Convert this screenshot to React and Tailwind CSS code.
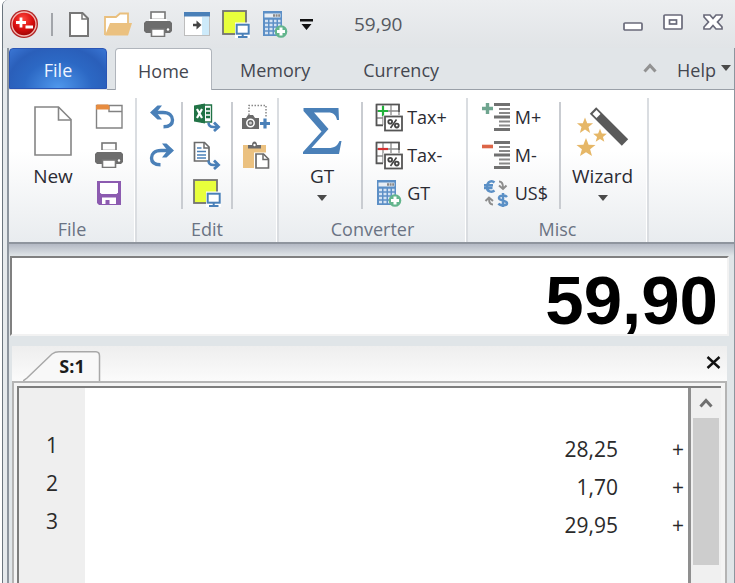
import React from "react";

const BLUE = "#4a80b8";
const GRAY = "#6a6a6a";

function Svg({ w, h, children }) {
  return (
    <svg width={w} height={h} viewBox={`0 0 ${w} ${h}`} fill="none" aria-hidden="true" className="shrink-0">
      {children}
    </svg>
  );
}

const Logo = () => (
  <Svg w={28} h={28}>
    <defs>
      <radialGradient id="ball" cx="0.45" cy="0.3" r="0.7">
        <stop offset="0" stopColor="#ff4a40" />
        <stop offset="0.6" stopColor="#d80d0d" />
        <stop offset="1" stopColor="#9c0505" />
      </radialGradient>
    </defs>
    <circle cx="14" cy="14" r="14" fill="#b32626" />
    <circle cx="14" cy="14" r="12" fill="url(#ball)" stroke="#f3b9b4" strokeWidth="1.3" />
    <path d="M6 12.500h10M11 7.500v10M15.500 17h7.500" stroke="#fff" strokeWidth="2.800" />
  </Svg>
);

const SmallPage = () => (
  <Svg w={20} h={25}>
    <path d="M1 1h12.500l5.500 5.500V24H1z" fill="#fff" stroke="#777" strokeWidth="2" />
    <path d="M13 1v6h6" stroke="#777" strokeWidth="1.500" />
  </Svg>
);

const BigPage = () => (
  <Svg w={38} h={50}>
    <path d="M1 1h23.500L37 13.500V49H1z" fill="#fff" stroke="#858585" strokeWidth="1.600" />
    <path d="M24.500 1v13H37" stroke="#858585" strokeWidth="1.600" />
  </Svg>
);

const OpenFolder = () => (
  <Svg w={28} h={25}>
    <path d="M1 23V5h11l4-3.500h8V11" fill="#fff" stroke="#e9bf7d" strokeWidth="1.800" />
    <path d="M1 23.500 6 11h22l-4 12.500z" fill="#ebc180" />
  </Svg>
);

const Printer = () => (
  <Svg w={28} h={26}>
    <path d="M2 10h24l2 2v8l-2 2H2l-2-2v-8z" fill="#6d6d6d" />
    <rect x="7" y="1" width="14" height="7.500" fill="#fff" stroke="#777" strokeWidth="1.600" />
    <path d="M5 8h18v2H5z" fill="#fff" />
    <path d="M4 10h20v2H4z" fill="#6d6d6d" />
    <rect x="7.500" y="18" width="13" height="7.500" fill="#fff" stroke="#777" strokeWidth="1.600" />
    <circle cx="24" cy="18.500" r="1.200" fill="#fff" />
  </Svg>
);

const DockPane = () => (
  <Svg w={26} h={24}>
    <rect x="0.500" y="0.500" width="25" height="23" fill="#fff" stroke="#bdbdbd" />
    <rect x="18" y="5" width="7" height="18" fill="#cdeafa" />
    <rect x="0" y="0" width="26" height="4.500" fill="#4a80b8" />
    <path d="M9 13h5" stroke="#444" strokeWidth="2.600" />
    <path d="m12.500 8.500 5 4.500-5 4.500z" fill="#444" />
  </Svg>
);

const ScreenNote = () => (
  <Svg w={28} h={28}>
    <rect x="1" y="1" width="23" height="23" fill="#e8ff3c" stroke="#737373" strokeWidth="1.800" />
    <path d="M13 12.500h15V28H13z" fill="#fff" />
    <rect x="14.700" y="14.700" width="12" height="9" fill="#fff" stroke={BLUE} strokeWidth="2" />
    <path d="M20.700 24v3M16 27h9.500" stroke={BLUE} strokeWidth="2" />
  </Svg>
);

const CalcAdd = () => (
  <Svg w={26} h={28}>
    <rect x="1" y="1" width="19" height="25" fill="#5c8fc6" />
    <path d="M2.500 3.500h16v4h-16z" fill="#e9eef4" />
    <path d="M11 5.500h7" stroke="#888" strokeWidth="2.500" strokeDasharray="2 .6" />
    {[10, 14, 18, 22].map((y) => (
      <path key={y} d={`M3 ${y + 1}h3M7.500 ${y + 1}h3M12 ${y + 1}h2.500M16 ${y + 1}h2.500`} stroke="#d5e3f3" strokeWidth="2.400" />
    ))}
    <circle cx="19" cy="21.500" r="6.300" fill="#63b58d" />
    <path d="M15 21.500h8M19 17.500v8" stroke="#fff" strokeWidth="3" />
  </Svg>
);

const NewTabIcon = () => (
  <Svg w={28} h={26}>
    <path d="M1.500 1.500H27V24H1.500z" fill="#fff" stroke="#828282" strokeWidth="1.400" />
    <path d="M14 2v5.500h13" stroke="#828282" strokeWidth="1.400" />
    <path d="M1 5.500V2l1-1.500h11l1.500 1.500v3.500z" fill="#e78c40" />
  </Svg>
);

const Save = () => (
  <Svg w={26} h={26}>
    <path d="M1 1h24v24H3l-2-2z" fill="#8c5bb0" />
    <path d="M4 3h18v9.500l-1.500 1.500h-15L4 12.500z" fill="#fff" />
    <path d="M6 17.500h14V24H6z" fill="#fff" />
    <path d="M9.500 20h4v4h-4z" fill="#8c5bb0" />
  </Svg>
);

const Undo = () => (
  <Svg w={28} h={26}>
    <path d="M5 8.500h10c6.500 0 9.500 3.500 9.500 7.500 0 4.500-3.500 6.800-9 6.800" stroke={BLUE} strokeWidth="3.400" />
    <path d="m2 8.500 7.500-7H14L8.500 8.500l5.500 7H9.500z" fill={BLUE} />
  </Svg>
);

const Redo = () => (
  <Svg w={28} h={26}>
    <path d="M23 8.500H13c-6.500 0-9.500 3.500-9.500 7.500 0 4.500 3.500 6.800 9 6.800" stroke={BLUE} strokeWidth="3.400" />
    <path d="m26 8.500-7.500-7H14l5.500 7-5.500 7h4.500z" fill={BLUE} />
  </Svg>
);

const BentArrow = () => (
  <>
    <path d="M15.500 19.500c0 3.500 2 4.500 5 4.500h4" stroke={BLUE} strokeWidth="2.600" />
    <path d="m21 19.500 4.500 4.500-4.500 4" stroke={BLUE} strokeWidth="2.800" />
  </>
);

const ExcelExport = () => (
  <Svg w={28} h={29}>
    <path d="M9 2h9.500v17H9z" fill="#fff" stroke="#217346" strokeWidth="1.400" />
    <path d="M1 2.500 12 .5v20L1 18.500z" fill="#217346" />
    <path d="m4 6 5 9M9 6l-5 9" stroke="#fff" strokeWidth="2.200" />
    <path d="M13 6h4M13 10h4M13 14h4" stroke="#217346" strokeWidth="2.400" />
    <BentArrow />
  </Svg>
);

const TextExport = () => (
  <Svg w={28} h={29}>
    <path d="M1.500 1.500h10l4.500 4.500v14H1.500z" fill="#fff" stroke="#6b6b6b" strokeWidth="1.700" />
    <path d="M11 1.500V7h5" stroke="#6b6b6b" strokeWidth="1.500" />
    <path d="M4 7h4.500M4 10.500h9M4 14h9M4 17h9" stroke={BLUE} strokeWidth="1.600" />
    <BentArrow />
  </Svg>
);

const Camera = () => (
  <Svg w={28} h={26}>
    <path d="M7 11V1.500h17V14" stroke="#888" strokeWidth="1.500" strokeDasharray="1.500 1.500" />
    <path d="M0 14h4l2-3h5l2 3h4v11H0z" fill={GRAY} />
    <circle cx="8.500" cy="19" r="3.700" fill={GRAY} stroke="#fff" strokeWidth="1.500" />
    <circle cx="8.500" cy="19" r="1.500" fill="#ccc" />
    <path d="M18 19.500h10M23 14.500v10" stroke={BLUE} strokeWidth="3.200" />
  </Svg>
);

const Paste = () => (
  <Svg w={28} h={28}>
    <path d="M1 4h23v23H1z" fill="#ebc180" />
    <path d="M6 7.500V4h4c0-2 1-3.500 2.500-3.500S15 2 15 4h4v3.500z" fill={GRAY} />
    <circle cx="12.500" cy="4" r="1.200" fill="#fff" />
    <path d="M12 11.500h16V28H12z" fill="#fff" />
    <path d="M14 13h7.500l5 5v9H14z" fill="#fff" stroke="#6b6b6b" strokeWidth="1.700" />
    <path d="M21 13v5.500h5.500" stroke="#6b6b6b" strokeWidth="1.500" />
  </Svg>
);

const Sigma = () => (
  <Svg w={40} h={48}>
    <path
      d="M1.500 1h35l.5 12h-2c-1-5-3.500-7.500-9-7.500H12l14.500 16.500L9.500 41H26c7 0 9.500-2.500 11.500-7h2L37 47H1v-2l18.500-20.500L1.500 4z"
      fill="#4a80b8"
    />
  </Svg>
);

const TaxIcon = ({ minus }) => (
  <Svg w={28} h={29}>
    <path d="M1.500 1.500H24V13M1.500 1.500V22H8M8 1.500V22M1.500 8H24M16 1.500V12M1.500 15H8" stroke="#8a8a8a" strokeWidth="1.300" />
    <path d="M24 9V1.500H1.500V22.500H8" stroke="#555" strokeWidth="1.700" />
    {minus ? (
      <path d="M3 8h10" stroke="#d32f2f" strokeWidth="2.200" />
    ) : (
      <path d="M3 8h10M8 3v10" stroke="#22b23b" strokeWidth="2.200" />
    )}
    <path d="M8.500 12H28v17H8.500z" fill="#fff" />
    <rect x="10" y="13.500" width="17" height="14" fill="#fff" stroke="#555" strokeWidth="1.800" />
    <circle cx="15.200" cy="18.700" r="1.900" stroke="#444" strokeWidth="1.800" />
    <circle cx="21.800" cy="22.600" r="1.900" stroke="#444" strokeWidth="1.800" />
    <path d="m21.500 16.500-6 8.500" stroke="#444" strokeWidth="1.600" />
  </Svg>
);

const MemIcon = ({ minus }) => (
  <Svg w={29} h={30}>
    <path d="M12 2.500h16M12 15h16M12 27.500h16" stroke="#707070" strokeWidth="3.200" />
    <path d="M17 7h11M17 11h11M17 19.500h11M17 23.500h11" stroke="#888" strokeWidth="1.800" />
    {minus ? (
      <path d="M0 6.500h11" stroke="#dc6547" strokeWidth="3.600" />
    ) : (
      <path d="M0 6.500h11M5.500 1v11" stroke="#6fa58f" strokeWidth="3.400" />
    )}
  </Svg>
);

const CurrencyIcon = () => (
  <Svg w={28} h={28}>
    <path d="M12.500 3.500C10 1.300 5.500 2 5 7.500s5 6 7.500 4M2 6.300h9M2 9h8.500" stroke="#5b90c6" strokeWidth="2.500" />
    <path d="M25 18c-1.500-2-8-2-8 1 0 3.200 8 2 8 5.200 0 2.800-7 2.500-8.500.3M21 14v14" stroke="#5b90c6" strokeWidth="2.500" />
    <path d="M17 2.500c3 0 4 2 4 6m-4-2 4 3.500 3.500-3.500" stroke="#8d8d8d" strokeWidth="2" />
    <path d="M11 25.500c-3 0-4-2-4-6M3.500 22l3.500-3.500 4 3.500" stroke="#8d8d8d" strokeWidth="2" />
  </Svg>
);

const Star = ({ x, y, s }) => (
  <path
    transform={`translate(${x} ${y}) scale(${s})`}
    d="M0-10 2.600-3.300 9.500-3.100 4.100 1.300 6 8.100 0 4.200-6 8.100-4.100 1.300-9.500-3.100-2.600-3.300z"
    fill="#e6b767"
  />
);

const WandIcon = () => (
  <Svg w={54} h={52}>
    <path d="M17 5.500 49 37.500" stroke="#5a5a5a" strokeWidth="9" />
    <path d="m18.500 7 4 4" stroke="#fff" strokeWidth="5.500" />
    <Star x={9} y={21} s={0.85} />
    <Star x={24} y={31} s={0.72} />
    <Star x={10} y={43} s={1} />
  </Svg>
);

const Caret = () => (
  <Svg w={10} h={6}>
    <path d="M0 0h10L5 6z" fill="#4a4a4a" />
  </Svg>
);

const Chevron = ({ color }) => (
  <Svg w={14} h={10}>
    <path d="m1.500 8.500 5.500-6 5.500 6" stroke={color} strokeWidth="3" />
  </Svg>
);

function IconButton({ label, children }) {
  return (
    <button type="button" aria-label={label} className="flex h-[38px] w-7 shrink-0 items-center justify-center">
      {children}
    </button>
  );
}

function Column({ children }) {
  return <div className="flex flex-col">{children}</div>;
}

const Separator = () => <div className="mt-1 h-[107px] w-[2px] shrink-0 bg-[#c9ccd1]" />;

function Group({ name, className, children }) {
  return (
    <section
      aria-label={name}
      className={`flex shrink-0 flex-col border-r-2 border-[#dadde1] shadow-[inset_-1px_0_0_#fff] ${className}`}
    >
      <div className="flex h-[119px] justify-center">{children}</div>
      <div className="text-center text-[18px] leading-6 text-[#6a7383]">{name}</div>
    </section>
  );
}

function BigButton({ icon, label, caret }) {
  return (
    <button type="button" className="flex shrink-0 flex-col items-center text-[19px] leading-6 text-[#2b2b33]">
      <span className="flex h-[66px] items-center justify-center">{icon}</span>
      <span>{label}</span>
      {caret && (
        <span className="flex h-5 items-center">
          <Caret />
        </span>
      )}
    </button>
  );
}

function LabelButton({ icon, label }) {
  return (
    <button type="button" className="flex h-[38px] items-center gap-1 text-[18px] text-[#2b2b33]">
      <span className="flex w-[29px] justify-center">{icon}</span>
      {label}
    </button>
  );
}

const rows = [
  [1, "28,25", "+"],
  [2, "1,70", "+"],
  [3, "29,95", "+"],
];

function TitleBar() {
  return (
    <header className="flex h-12 items-center bg-linear-to-b from-[#eceef0] to-[#e1e4e7] pr-3 pl-[7px]">
      <Logo />
      <div className="mr-4 ml-[13px] h-[23px] w-[2px] bg-[#a2a5aa]" />
      <div className="flex items-center gap-3">
        <button type="button" aria-label="New" className="pr-[3px]"><SmallPage /></button>
        <button type="button" aria-label="Open"><OpenFolder /></button>
        <button type="button" aria-label="Print"><Printer /></button>
        <button type="button" aria-label="Dock"><DockPane /></button>
        <button type="button" aria-label="Note"><ScreenNote /></button>
        <button type="button" aria-label="Grand total"><CalcAdd /></button>
        <button type="button" aria-label="Customize">
          <Svg w={13} h={11}>
            <path d="M0 0h13v2.500H0zM1.500 5h10l-5 6z" fill="#111" />
          </Svg>
        </button>
      </div>
      <h1 className="ml-[41px] text-[19px] text-[#555860]">59,90</h1>
      <div className="ml-auto flex items-center gap-5">
        <button type="button" aria-label="Minimize" className="pt-1">
          <Svg w={20} h={9}>
            <rect x="1" y="1" width="18" height="7" rx="1" fill="#fff" stroke="#696a7a" strokeWidth="1.700" />
          </Svg>
        </button>
        <button type="button" aria-label="Maximize" className="pb-1">
          <Svg w={20} h={16}>
            <rect x="1" y="1" width="18" height="14" rx="1" fill="#fff" stroke="#696a7a" strokeWidth="1.700" />
            <rect x="6.500" y="6" width="7" height="4" stroke="#696a7a" strokeWidth="1.700" />
          </Svg>
        </button>
        <button type="button" aria-label="Close" className="pb-1">
          <Svg w={20} h={16}>
            <path d="M1 1h6l3 3.500L13 1h6v2l-4.500 5L19 13v2h-6l-3-3.500L7 15H1v-2l4.500-5L1 3z" fill="#fff" stroke="#696a7a" strokeWidth="1.700" />
          </Svg>
        </button>
      </div>
    </header>
  );
}

function Tabs() {
  return (
    <nav className="flex h-[42px] bg-[#e1e5e8] text-[18px] text-[#444750]">
      <button
        type="button"
        className="h-[41px] w-[98px] rounded-t-[4px] border border-[#2a55b5] bg-[radial-gradient(ellipse_at_bottom,#4f98ec_0%,#2c68c4_50%,#2a5fba_75%,#3a76d4_100%)] pt-[3px] text-[#eef4ff]"
      >
        File
      </button>
      <div className="w-2 border-b border-[#9aa0a8]" />
      <button type="button" className="h-full w-[97px] rounded-t-[4px] border border-b-0 border-[#b0b5bc] bg-white pt-[3px]">
        Home
      </button>
      <div className="flex flex-1 items-center border-b border-[#9aa0a8] pt-[3px] pr-[3px] pl-7">
        <button type="button">Memory</button>
        <button type="button" className="ml-[53px]">Currency</button>
        <button type="button" aria-label="Collapse ribbon" className="mr-5 mb-1 ml-auto">
          <Chevron color="#929292" />
        </button>
        <button type="button" className="flex items-center gap-[5px]">
          Help
          <span className="pb-1">
            <Caret />
          </span>
        </button>
      </div>
    </nav>
  );
}

function Ribbon() {
  return (
    <div className="flex h-[154px] border-b-2 border-[#8f959e] bg-linear-to-b from-white from-40% to-[#e9ecef] pt-2">
      <Group name="File" className="w-[128px]">
        <div className="flex gap-[22px] pl-3">
          <BigButton icon={<BigPage />} label="New" />
          <Column>
            <IconButton label="New tape"><NewTabIcon /></IconButton>
            <IconButton label="Print tape"><Printer /></IconButton>
            <IconButton label="Save"><Save /></IconButton>
          </Column>
        </div>
      </Group>
      <Group name="Edit" className="w-[142px]">
        <div className="flex gap-[5px] pl-1">
          <Column>
            <IconButton label="Undo"><Undo /></IconButton>
            <IconButton label="Redo"><Redo /></IconButton>
          </Column>
          <Separator />
          <div className="px-[5px]">
            <Column>
              <IconButton label="Export to Excel"><ExcelExport /></IconButton>
              <IconButton label="Export to text"><TextExport /></IconButton>
              <IconButton label="Screen note"><ScreenNote /></IconButton>
            </Column>
          </div>
          <Separator />
          <div className="pl-1">
            <Column>
              <IconButton label="Snapshot"><Camera /></IconButton>
              <IconButton label="Paste"><Paste /></IconButton>
            </Column>
          </div>
        </div>
      </Group>
      <Group name="Converter" className="w-[189px]">
        <div className="flex gap-[11px] pr-1">
          <div className="px-2">
            <BigButton icon={<Sigma />} label="GT" caret />
          </div>
          <Separator />
          <Column>
            <LabelButton icon={<TaxIcon />} label="Tax+" />
            <LabelButton icon={<TaxIcon minus />} label="Tax-" />
            <LabelButton icon={<CalcAdd />} label="GT" />
          </Column>
        </div>
      </Group>
      <Group name="Misc" className="w-[181px]">
        <div className="flex gap-[11px]">
          <Column>
            <LabelButton icon={<MemIcon />} label="M+" />
            <LabelButton icon={<MemIcon minus />} label="M-" />
            <LabelButton icon={<CurrencyIcon />} label="US$" />
          </Column>
          <Separator />
          <BigButton icon={<WandIcon />} label="Wizard" caret />
        </div>
      </Group>
    </div>
  );
}

function Tape() {
  return (
    <main className="mr-[7px] ml-[3px] flex flex-1 flex-col">
      <div className="flex h-[35px] items-end bg-linear-to-b from-[#eeeeee] to-[#fbfbfb] pr-[6px] pl-[11px]">
        <button type="button" className="relative h-[30px] w-[78px] pl-5 text-[18px] font-bold text-[#1c1c1c]">
          <svg width="78" height="30" viewBox="0 0 78 30" aria-hidden="true" className="absolute top-0 left-0">
            <path d="M0 30 4 27 29 3Q32 .8 36 .8H73Q76.500 1 76.500 5V30" fill="#f8f8f8" stroke="#a8a8a8" strokeWidth="1.500" />
          </svg>
          <span className="relative">S:1</span>
        </button>
        <button type="button" aria-label="Close tape" className="mb-3 ml-auto">
          <Svg w={15} h={13}>
            <path d="m1.500 1 12 11M13.500 1l-12 11" stroke="#111" strokeWidth="2.400" />
          </Svg>
        </button>
      </div>
      <div className="flex flex-1 border-x-2 border-t-2 border-[#b4b4b4] bg-[#f4f4f4] pt-[3px] pr-1 pl-[3px]">
        <div className="flex flex-1 border-t-2 border-l-2 border-[#7d7d7d]">
          <div className="flex-1 bg-[linear-gradient(to_right,#efefef_66px,#ffffff_66px)] pt-[42px]">
            <table className="w-full table-fixed text-[21px] leading-6 text-[#2a2a2a]">
              <tbody>
                {rows.map(([n, value, sign]) => (
                  <tr key={n} className="h-[38px]">
                    <td className="w-[66px] pb-2 text-center">{n}</td>
                    <td className="text-right">{value}</td>
                    <td className="w-[70px] pr-1 text-right">{sign}</td>
                  </tr>
                ))}
              </tbody>
            </table>
          </div>
          <div className="flex w-[33px] flex-col items-center border-l-[3px] border-[#8f8f8f] bg-[#f0f0f0]">
            <div className="flex h-[30px] items-center">
              <Chevron color="#707070" />
            </div>
            <div className="h-[147px] w-[26px] bg-[#cdcdcd]" />
          </div>
        </div>
      </div>
    </main>
  );
}

export default function App() {
  return (
    <div className="flex min-h-screen bg-white pl-[2px] font-['Open_Sans','Noto_Sans',sans-serif]">
      <div className="flex min-w-0 flex-1 flex-col overflow-hidden rounded-tl-[6px] border-l border-[#6b757e] bg-[#e6eaed]">
        <TitleBar />
        <div className="ml-1 flex flex-1 flex-col border-r border-l-2 border-[#8d959e] bg-[#e0e5e8]">
          <Tabs />
          <Ribbon />
          <div className="h-[12px] bg-linear-to-b from-[#b4b9c4] to-[#e0e5e8]" />
          <input
            readOnly
            aria-label="Display"
            value="59,90"
            className="mr-[5px] ml-[1px] h-[80px] border-t-2 border-r-2 border-b-2 border-l-2 border-t-[#808080] border-r-[#f2f2f2] border-b-[#f2f2f2] border-l-[#808080] bg-white pt-2 pr-[9px] text-right font-['Liberation_Sans',Arial,sans-serif] text-[69px] leading-none font-bold text-black outline-none"
          />
          <div className="h-[10px]" />
          <Tape />
        </div>
      </div>
    </div>
  );
}
